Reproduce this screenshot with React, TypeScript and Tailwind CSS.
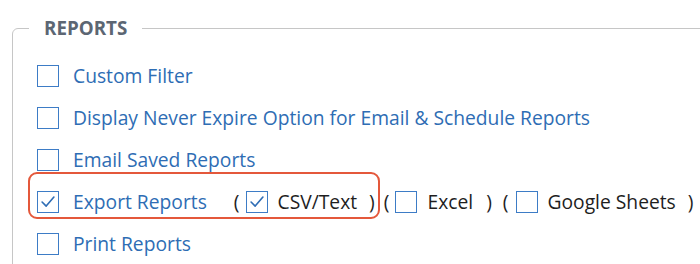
import React from "react";

function Box({ checked }: { checked?: boolean }) {
  return (
    <span className="w-[22px] h-[22px] shrink-0 border-[1.5px] border-[#3d7cc6] bg-white flex items-center justify-center">
      {checked && (
        <svg viewBox="0 0 22 22" className="w-[22px] h-[22px]" fill="none">
          <path d="M4.5 11 L9 15.5 L17.5 5.5" stroke="#2f6db5" strokeWidth="1.8" strokeLinecap="round" strokeLinejoin="round" />
        </svg>
      )}
    </span>
  );
}

export default function App() {
  const rows = [
    "Custom Filter",
    "Display Never Expire Option for Email & Schedule Reports",
    "Email Saved Reports",
  ];

  return (
    <div className="w-[700px] h-[264px] overflow-hidden bg-white pt-[18px] font-['Open_Sans',sans-serif]">
      <fieldset className="ml-3 w-[740px] border border-[#c6c6c6] rounded-md pl-6 pt-[17px] pb-10">
        <legend className="-ml-2 px-[15px] text-[18.8px] leading-[20px] font-bold text-[#5c6673]">
          REPORTS
        </legend>

        {rows.map((r) => (
          <div key={r} className="h-[42px] flex items-center">
            <Box />
            <span className="ml-[14px] text-[19.25px] text-[#2e6db4]">{r}</span>
          </div>
        ))}

        {/* Export row */}
        <div className="relative h-[42px] flex items-center text-[19.25px]">
          <div className="absolute left-[-9px] top-[-9px] w-[352px] h-[47px] border-2 border-[#e4583b] rounded-[9px]" />
          <Box checked />
          <span className="ml-[14px] text-[#2e6db4]">Export Reports</span>
          <span className="ml-[27px] text-[#1e1e1e]">(</span>
          <span className="ml-[6px]"><Box checked /></span>
          <span className="ml-[10px] text-[#1e1e1e]">CSV/Text</span>
          <span className="ml-[12px] text-[#1e1e1e]">)</span>
          <span className="ml-[9px] text-[#1e1e1e]">(</span>
          <span className="ml-[6px]"><Box /></span>
          <span className="ml-[10px] text-[#1e1e1e]">Excel</span>
          <span className="ml-[13px] text-[#1e1e1e]">)</span>
          <span className="ml-[11px] text-[#1e1e1e]">(</span>
          <span className="ml-[7px]"><Box /></span>
          <span className="ml-[10px] text-[#1e1e1e]">Google Sheets</span>
          <span className="ml-[12px] text-[#1e1e1e]">)</span>
        </div>

        <div className="h-[42px] flex items-center">
          <Box />
          <span className="ml-[14px] text-[19.25px] text-[#2e6db4]">Print Reports</span>
        </div>
      </fieldset>
    </div>
  );
}
